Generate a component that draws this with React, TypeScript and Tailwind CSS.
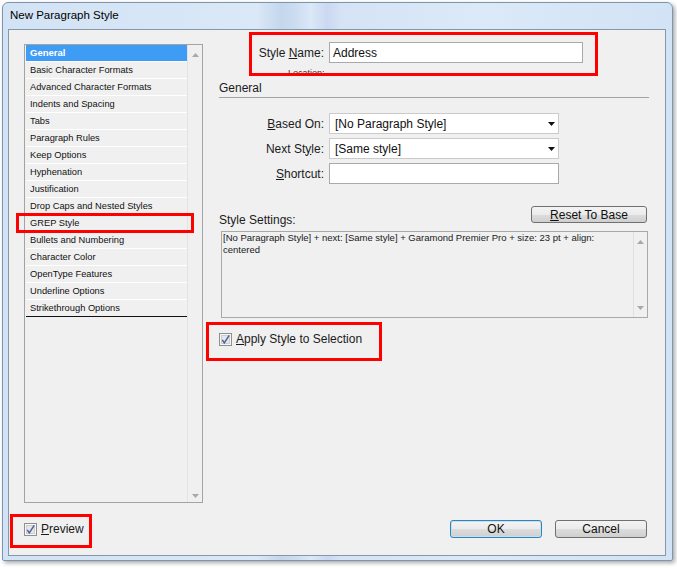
import React from "react";

const sections = [
  "General",
  "Basic Character Formats",
  "Advanced Character Formats",
  "Indents and Spacing",
  "Tabs",
  "Paragraph Rules",
  "Keep Options",
  "Hyphenation",
  "Justification",
  "Drop Caps and Nested Styles",
  "GREP Style",
  "Bullets and Numbering",
  "Character Color",
  "OpenType Features",
  "Underline Options",
  "Strikethrough Options",
];

function DropArrow() {
  return (
    <svg width="7" height="4" viewBox="0 0 7 4">
      <path d="M0 0h7L3.5 4z" fill="#111" />
    </svg>
  );
}

function ScrollArrow({ up }: { up?: boolean }) {
  return (
    <svg width="7" height="4" viewBox="0 0 7 4">
      <path d={up ? "M0 4h7L3.5 0z" : "M0 0h7L3.5 4z"} fill="#a9a9a9" />
    </svg>
  );
}

function Checkbox() {
  return (
    <svg width="13" height="13" viewBox="0 0 13 13" className="shrink-0">
      <rect x="0.5" y="0.5" width="12" height="12" fill="#f7f7f7" stroke="#8f8f8f" />
      <rect x="2.5" y="2.5" width="8" height="8" fill="#e6e6e6" stroke="#cdcdcd" />
      <path d="M3.3 6.8 L5.3 9.8 L10.2 2.4" stroke="#4a62a8" strokeWidth="1.5" fill="none" />
    </svg>
  );
}

function Label({ children }: { children: React.ReactNode }) {
  return <div className="w-[105px] shrink-0 text-right text-[12px] leading-[14px] text-[#1b1b1b]">{children}</div>;
}

function Select({ value }: { value: string }) {
  return (
    <div className="flex h-[21px] w-[230px] items-center justify-between border border-[#cbcbcb] bg-white pl-[5px] pr-[3px] text-[12px] text-[#111]">
      <span>{value}</span>
      <DropArrow />
    </div>
  );
}

const buttonBase =
  "flex items-center justify-center rounded-[3px] border bg-[linear-gradient(#f3f3f3_0%,#ebebeb_50%,#dddddd_51%,#cfcfcf_100%)] text-[12px] text-[#111]";

function SectionList() {
  return (
    <div className="mt-[2px] flex h-[459px] w-[179px] border border-[#a3a3a3] bg-[#f0f0f0]">
      <div className="w-[162px] pl-px">
        {sections.map((name, i) => (
          <div
            key={name}
            className={
              i === 0
                ? "flex h-[17px] items-center border-b border-white bg-[#3f9cf4] pl-[4px] pt-px text-[9.5px] font-bold text-white"
                : i === sections.length - 1
                  ? "flex h-[17px] items-center border-b border-[#111] pl-[4px] pt-px text-[9.3px] text-[#111]"
                  : "flex h-[17px] items-center border-b border-white pl-[4px] pt-px text-[9.3px] text-[#111]"
            }
          >
            {name}
          </div>
        ))}
      </div>
      <div className="flex w-[15px] flex-col items-center justify-between border-l border-[#e3e3e3] pb-[4px] pt-[8px]">
        <ScrollArrow up />
        <ScrollArrow />
      </div>
    </div>
  );
}

function GeneralPanel() {
  return (
    <div className="ml-[16px] flex w-[430px] flex-col">
      <div className="flex items-center gap-[5px]">
        <Label>
          Style <u>N</u>ame:
        </Label>
        <div className="flex h-[21px] w-[254px] items-center border border-[#a9a9a9] bg-white pl-[3px] text-[12px] text-[#111]">
          Address
        </div>
      </div>
      {/* half hidden under the annotation box, as in the shot */}
      <div className="h-[10px] pl-[69px] pt-[5px] text-[9px] leading-[10px] text-[#333]">Location:</div>

      <div className="mt-[8px] text-[12px] leading-[14px] text-[#1b1b1b]">General</div>
      <div className="mt-[2px] h-px bg-[#a3a3a3]" />

      <div className="mt-[15px] flex items-center gap-[5px]">
        <Label>
          <u>B</u>ased On:
        </Label>
        <Select value="[No Paragraph Style]" />
      </div>
      <div className="mt-[4px] flex items-center gap-[5px]">
        <Label>
          Next St<u>y</u>le:
        </Label>
        <Select value="[Same style]" />
      </div>
      <div className="mt-[4px] flex items-center gap-[5px]">
        <Label>
          <u>S</u>hortcut:
        </Label>
        <div className="h-[21px] w-[230px] border border-[#a9a9a9] bg-white" />
      </div>

      <div className="mt-[22px] flex h-[20px] items-start justify-between">
        <div className="mt-[7px] text-[12px] leading-[14px] text-[#1b1b1b]">Style Settings:</div>
        <button className={`${buttonBase} mr-[2px] h-[17px] w-[116px] border-[#707070]`}>
          <u>R</u>eset To Base
        </button>
      </div>

      <div className="ml-[2px] mt-[5px] flex h-[87px] w-[427px] border border-[#a9a9a9] bg-[#f0f0f0]">
        <div className="flex-1 whitespace-nowrap pl-px text-[9.5px] leading-[12px] text-[#1a1a1a]">
          [No Paragraph Style] + next: [Same style] + Garamond Premier Pro + size: 23 pt + align:
          <br />
          centered
        </div>
        <div className="flex w-[14px] flex-col items-center justify-between border-l border-[#e0e0e0] pb-[7px] pt-[8px]">
          <ScrollArrow up />
          <ScrollArrow />
        </div>
      </div>

      <div className="mt-[14px] flex items-center gap-[4px]">
        <Checkbox />
        <span className="text-[12px] leading-[14px] text-[#1b1b1b]">
          <u>A</u>pply Style to Selection
        </span>
      </div>
    </div>
  );
}

export default function App() {
  return (
    <div className="h-[568px] w-[677px] overflow-hidden bg-white pl-[2px] pt-[2px] font-['Liberation_Sans',Arial,sans-serif]">
      <div className="flex h-[559px] w-[671px] flex-col rounded-t-[6px] rounded-b-[2px] border border-[#7f95ad] bg-[linear-gradient(90deg,#d2e3f5_0%,#dae8f7_38%,#c5d7ec_41.5%,#cbdcf0_43.5%,#dae8f7_46%,#cbd8f1_48.5%,#d5e3f5_50.5%,#dbe9f8_72%,#d2e3f5_100%)] shadow-[2px_2px_4px_rgba(0,0,0,0.35)]">
        <div className="flex h-[26px] shrink-0 items-center pl-[7px] text-[11.5px] text-black">New Paragraph Style</div>

        <div className="relative ml-[5px] flex h-[527px] w-[658px] flex-col border border-[#8797aa] bg-[#f0f0f0] pl-[15px] pr-[16px] pt-[12px]">
          <div className="flex">
            <SectionList />
            <GeneralPanel />
          </div>

          <div className="mt-[17px] flex items-center justify-between">
            <div className="flex items-center gap-[4px]">
              <Checkbox />
              <span className="text-[12px] leading-[14px] text-[#1b1b1b]">
                <u>P</u>review
              </span>
            </div>
            <div className="mr-[2px] flex gap-[13px]">
              <button className={`${buttonBase} h-[18px] w-[92px] border-[#3c7fb1] shadow-[inset_0_0_0_1px_#b9e3f9]`}>OK</button>
              <button className={`${buttonBase} h-[18px] w-[92px] border-[#707070]`}>Cancel</button>
            </div>
          </div>

          {/* annotation boxes */}
          <div className="pointer-events-none absolute left-[240px] top-[2px] h-[44px] w-[349px] border-[3px] border-[#f00]" />
          <div className="pointer-events-none absolute left-[7px] top-[183px] h-[20px] w-[178px] border-[3px] border-[#f00]" />
          <div className="pointer-events-none absolute left-[197px] top-[292px] h-[39px] w-[176px] border-[3px] border-[#f00]" />
          <div className="pointer-events-none absolute left-[1px] top-[484px] h-[34px] w-[82px] border-[3px] border-[#f00]" />
        </div>
      </div>
    </div>
  );
}
